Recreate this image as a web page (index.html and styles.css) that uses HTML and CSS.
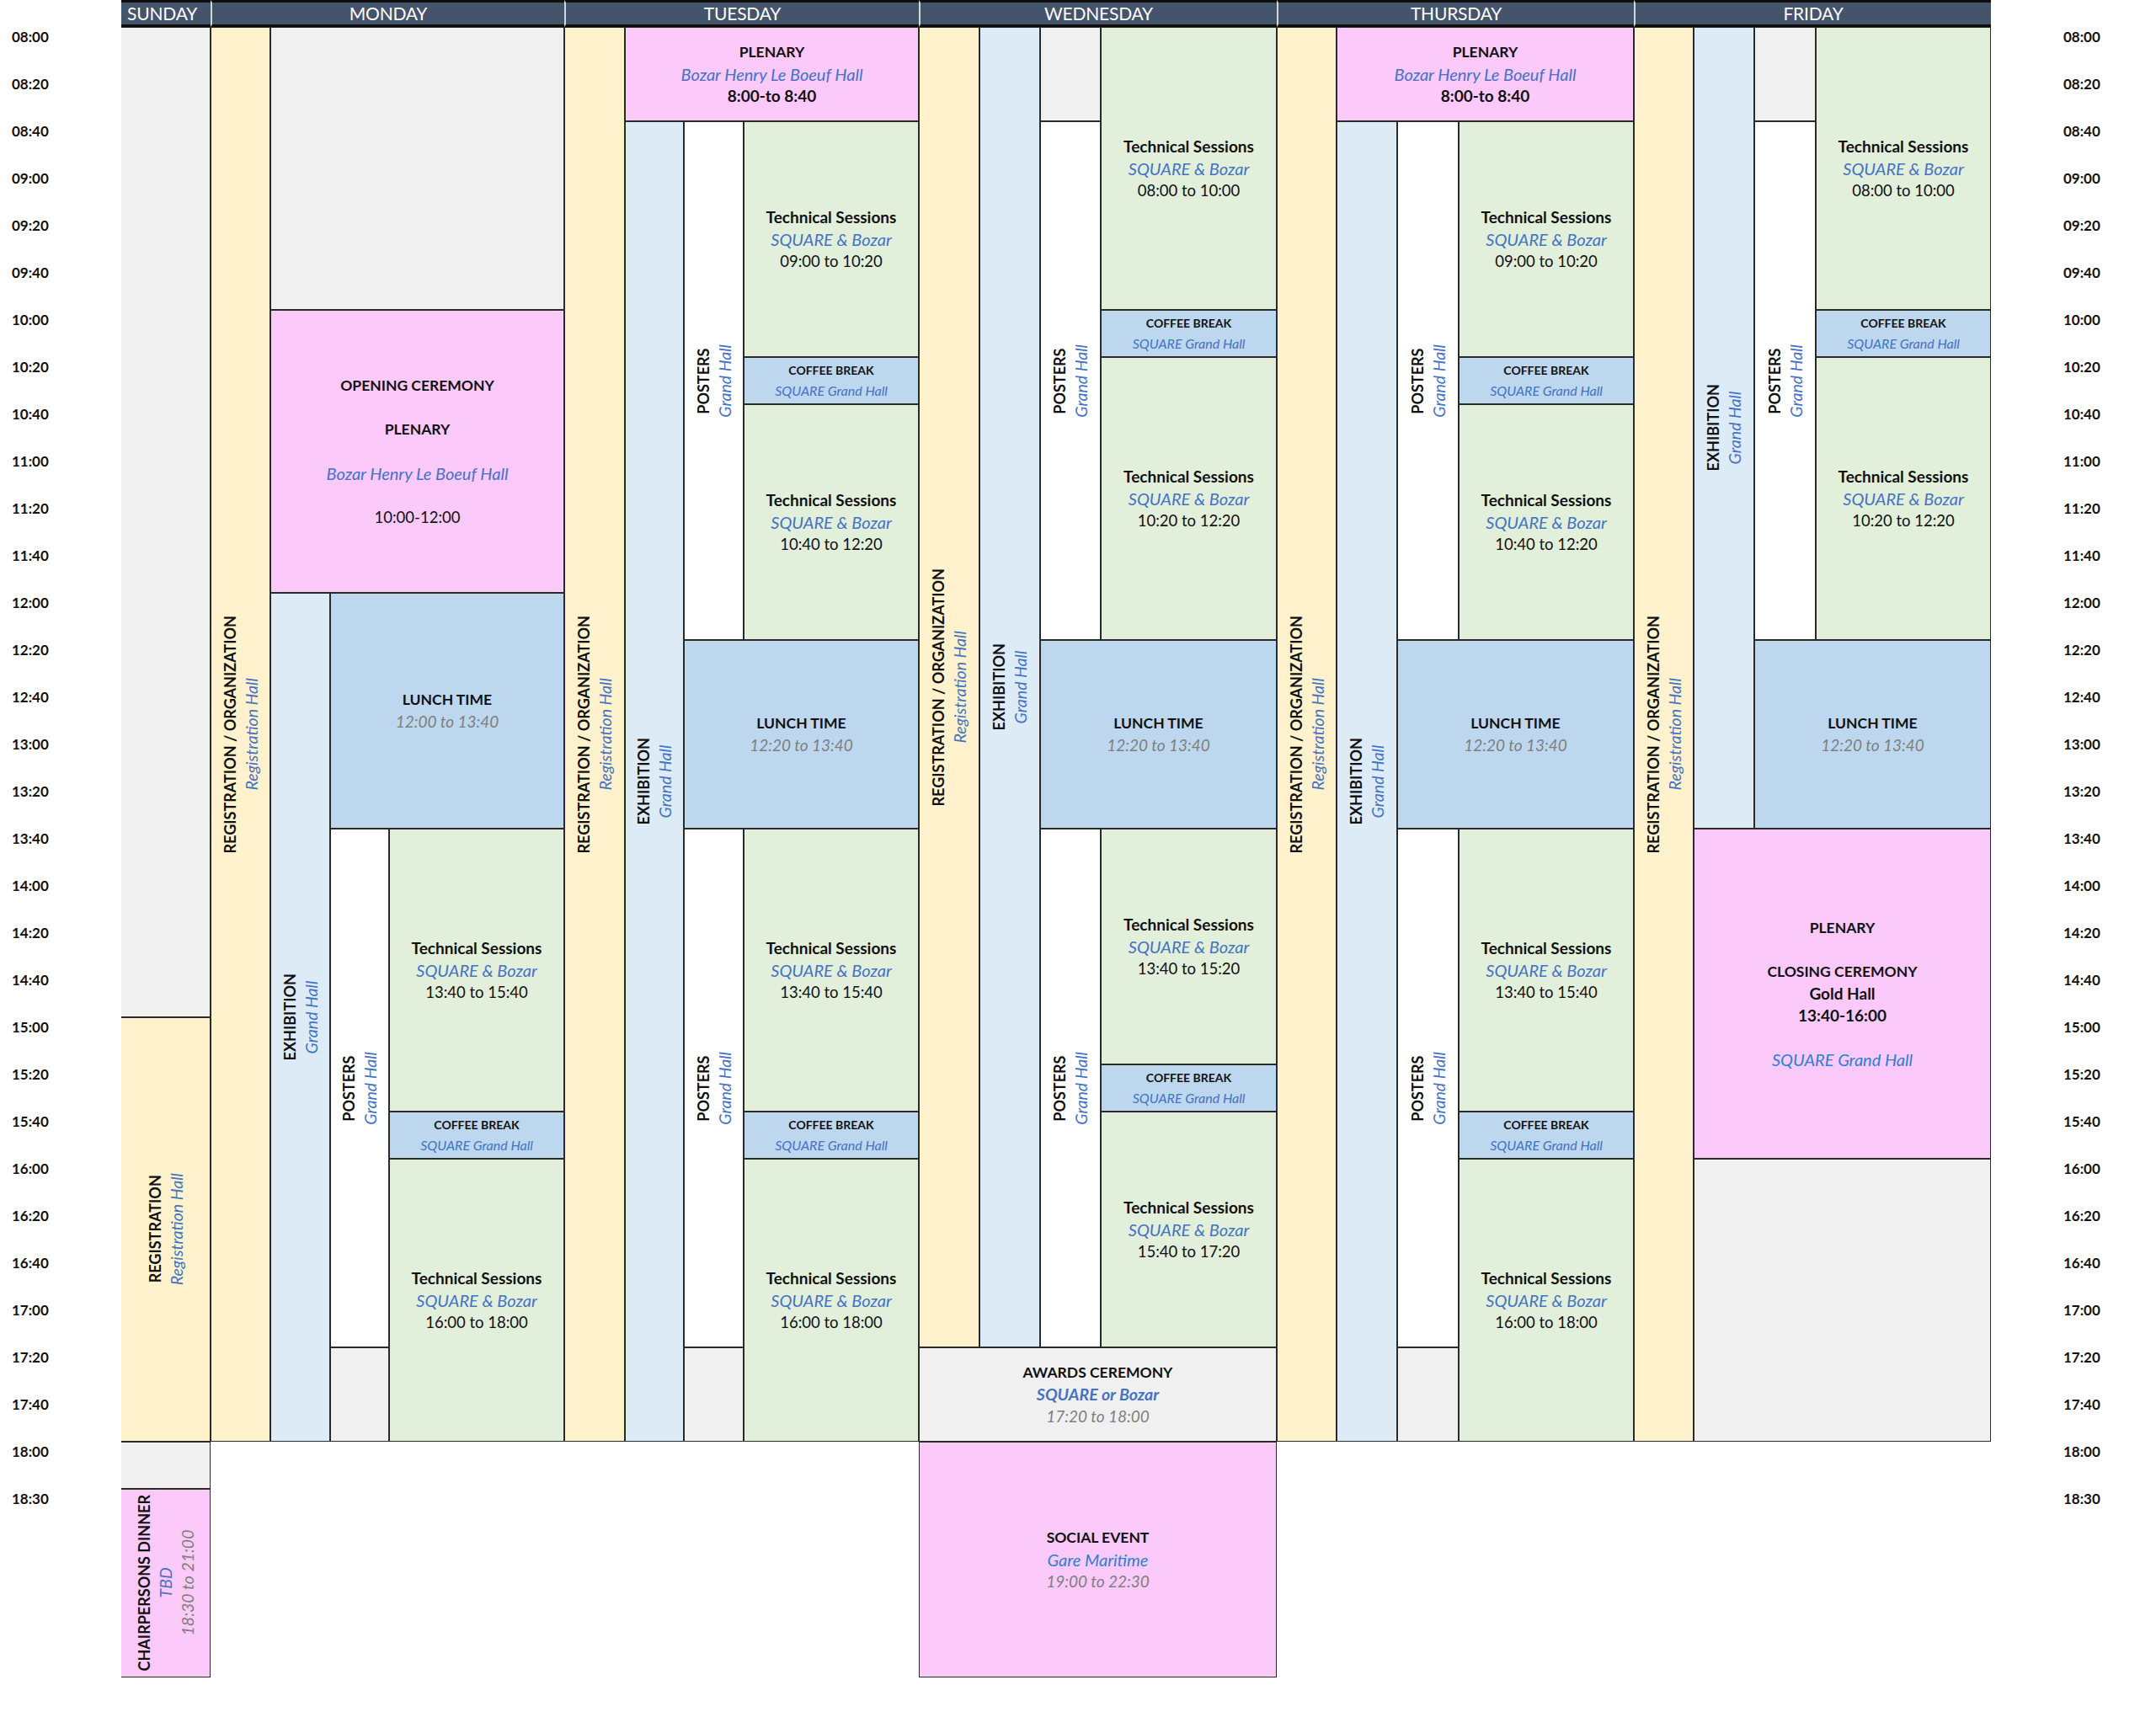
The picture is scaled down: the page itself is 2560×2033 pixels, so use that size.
FILE: index.html
```html
<!DOCTYPE html>
<html lang="en">
<head>
<meta charset="utf-8">
<title>Conference Week Schedule</title>
<link rel="stylesheet" href="styles.css">
</head>
<body>
<div class="sched">
  <!-- header -->
  <div class="hd hd-sun" style="grid-column:2/3">SUNDAY</div>
  <div class="hd" style="grid-column:3/7">MONDAY</div>
  <div class="hd" style="grid-column:7/11">TUESDAY</div>
  <div class="hd" style="grid-column:11/15">WEDNESDAY</div>
  <div class="hd" style="grid-column:15/19">THURSDAY</div>
  <div class="hd" style="grid-column:19/23">FRIDAY</div>

  <!-- time labels left -->
  <div class="tl" style="grid-row:2">08:00</div>
  <div class="tl" style="grid-row:3">08:20</div>
  <div class="tl" style="grid-row:4">08:40</div>
  <div class="tl" style="grid-row:5">09:00</div>
  <div class="tl" style="grid-row:6">09:20</div>
  <div class="tl" style="grid-row:7">09:40</div>
  <div class="tl" style="grid-row:8">10:00</div>
  <div class="tl" style="grid-row:9">10:20</div>
  <div class="tl" style="grid-row:10">10:40</div>
  <div class="tl" style="grid-row:11">11:00</div>
  <div class="tl" style="grid-row:12">11:20</div>
  <div class="tl" style="grid-row:13">11:40</div>
  <div class="tl" style="grid-row:14">12:00</div>
  <div class="tl" style="grid-row:15">12:20</div>
  <div class="tl" style="grid-row:16">12:40</div>
  <div class="tl" style="grid-row:17">13:00</div>
  <div class="tl" style="grid-row:18">13:20</div>
  <div class="tl" style="grid-row:19">13:40</div>
  <div class="tl" style="grid-row:20">14:00</div>
  <div class="tl" style="grid-row:21">14:20</div>
  <div class="tl" style="grid-row:22">14:40</div>
  <div class="tl" style="grid-row:23">15:00</div>
  <div class="tl" style="grid-row:24">15:20</div>
  <div class="tl" style="grid-row:25">15:40</div>
  <div class="tl" style="grid-row:26">16:00</div>
  <div class="tl" style="grid-row:27">16:20</div>
  <div class="tl" style="grid-row:28">16:40</div>
  <div class="tl" style="grid-row:29">17:00</div>
  <div class="tl" style="grid-row:30">17:20</div>
  <div class="tl" style="grid-row:31">17:40</div>
  <div class="tl" style="grid-row:32">18:00</div>
  <div class="tl" style="grid-row:33">18:30</div>

  <!-- time labels right -->
  <div class="tr" style="grid-row:2">08:00</div>
  <div class="tr" style="grid-row:3">08:20</div>
  <div class="tr" style="grid-row:4">08:40</div>
  <div class="tr" style="grid-row:5">09:00</div>
  <div class="tr" style="grid-row:6">09:20</div>
  <div class="tr" style="grid-row:7">09:40</div>
  <div class="tr" style="grid-row:8">10:00</div>
  <div class="tr" style="grid-row:9">10:20</div>
  <div class="tr" style="grid-row:10">10:40</div>
  <div class="tr" style="grid-row:11">11:00</div>
  <div class="tr" style="grid-row:12">11:20</div>
  <div class="tr" style="grid-row:13">11:40</div>
  <div class="tr" style="grid-row:14">12:00</div>
  <div class="tr" style="grid-row:15">12:20</div>
  <div class="tr" style="grid-row:16">12:40</div>
  <div class="tr" style="grid-row:17">13:00</div>
  <div class="tr" style="grid-row:18">13:20</div>
  <div class="tr" style="grid-row:19">13:40</div>
  <div class="tr" style="grid-row:20">14:00</div>
  <div class="tr" style="grid-row:21">14:20</div>
  <div class="tr" style="grid-row:22">14:40</div>
  <div class="tr" style="grid-row:23">15:00</div>
  <div class="tr" style="grid-row:24">15:20</div>
  <div class="tr" style="grid-row:25">15:40</div>
  <div class="tr" style="grid-row:26">16:00</div>
  <div class="tr" style="grid-row:27">16:20</div>
  <div class="tr" style="grid-row:28">16:40</div>
  <div class="tr" style="grid-row:29">17:00</div>
  <div class="tr" style="grid-row:30">17:20</div>
  <div class="tr" style="grid-row:31">17:40</div>
  <div class="tr" style="grid-row:32">18:00</div>
  <div class="tr" style="grid-row:33">18:30</div>

  <!-- SUNDAY -->
  <div class="cell sun grey" style="grid-column:2/3;grid-row:2/23"></div>
  <div class="cell sun reg" style="grid-column:2/3;grid-row:23/32">
    <div class="vt"><span class="t">REGISTRATION</span><span class="v">Registration Hall</span></div>
  </div>
  <div class="cell sun grey" style="grid-column:2/3;grid-row:32/33"></div>
  <div class="cell sun pink" style="grid-column:2/3;grid-row:33/37">
    <div class="vt"><span class="t">CHAIRPERSONS DINNER</span><span class="v">TBD</span><span class="g">18:30 to 21:00</span></div>
  </div>

  <!-- MONDAY -->
  <div class="cell reg" style="grid-column:3/4;grid-row:2/32">
    <div class="vt"><span class="t">REGISTRATION / ORGANIZATION</span><span class="v">Registration Hall</span></div>
  </div>
  <div class="cell grey" style="grid-column:4/7;grid-row:2/8"></div>
  <div class="cell pink" style="grid-column:4/7;grid-row:8/14">
    <span class="t">OPENING CEREMONY</span><span class="blank"></span>
    <span class="t">PLENARY</span><span class="blank"></span>
    <span class="v">Bozar Henry Le Boeuf Hall</span><span class="blank"></span>
    <span class="tm">10:00-12:00</span>
  </div>
  <div class="cell exh" style="grid-column:4/5;grid-row:14/32">
    <div class="vt"><span class="t">EXHIBITION</span><span class="v">Grand Hall</span></div>
  </div>
  <div class="cell lunch" style="grid-column:5/7;grid-row:14/19">
    <span class="t">LUNCH TIME</span><span class="g">12:00 to 13:40</span>
  </div>
  <div class="cell post" style="grid-column:5/6;grid-row:19/30">
    <div class="vt"><span class="t">POSTERS</span><span class="v">Grand Hall</span></div>
  </div>
  <div class="cell grey" style="grid-column:5/6;grid-row:30/32"></div>
  <div class="cell tech" style="grid-column:6/7;grid-row:19/25">
    <span class="tt">Technical Sessions</span><span class="v">SQUARE &amp; Bozar</span><span class="tm">13:40 to 15:40</span>
  </div>
  <div class="cell coffee" style="grid-column:6/7;grid-row:25/26">
    <span class="ct">COFFEE BREAK</span><span class="cv">SQUARE Grand Hall</span>
  </div>
  <div class="cell tech" style="grid-column:6/7;grid-row:26/32">
    <span class="tt">Technical Sessions</span><span class="v">SQUARE &amp; Bozar</span><span class="tm">16:00 to 18:00</span>
  </div>

  <!-- TUESDAY -->
  <div class="cell reg" style="grid-column:7/8;grid-row:2/32">
    <div class="vt"><span class="t">REGISTRATION / ORGANIZATION</span><span class="v">Registration Hall</span></div>
  </div>
  <div class="cell pink" style="grid-column:8/11;grid-row:2/4">
    <span class="t">PLENARY</span><span class="v">Bozar Henry Le Boeuf Hall</span><span class="tt">8:00-to 8:40</span>
  </div>
  <div class="cell exh" style="grid-column:8/9;grid-row:4/32">
    <div class="vt"><span class="t">EXHIBITION</span><span class="v">Grand Hall</span></div>
  </div>
  <div class="cell post" style="grid-column:9/10;grid-row:4/15">
    <div class="vt"><span class="t">POSTERS</span><span class="v">Grand Hall</span></div>
  </div>
  <div class="cell tech" style="grid-column:10/11;grid-row:4/9">
    <span class="tt">Technical Sessions</span><span class="v">SQUARE &amp; Bozar</span><span class="tm">09:00 to 10:20</span>
  </div>
  <div class="cell coffee" style="grid-column:10/11;grid-row:9/10">
    <span class="ct">COFFEE BREAK</span><span class="cv">SQUARE Grand Hall</span>
  </div>
  <div class="cell tech" style="grid-column:10/11;grid-row:10/15">
    <span class="tt">Technical Sessions</span><span class="v">SQUARE &amp; Bozar</span><span class="tm">10:40 to 12:20</span>
  </div>
  <div class="cell lunch" style="grid-column:9/11;grid-row:15/19">
    <span class="t">LUNCH TIME</span><span class="g">12:20 to 13:40</span>
  </div>
  <div class="cell post" style="grid-column:9/10;grid-row:19/30">
    <div class="vt"><span class="t">POSTERS</span><span class="v">Grand Hall</span></div>
  </div>
  <div class="cell grey" style="grid-column:9/10;grid-row:30/32"></div>
  <div class="cell tech" style="grid-column:10/11;grid-row:19/25">
    <span class="tt">Technical Sessions</span><span class="v">SQUARE &amp; Bozar</span><span class="tm">13:40 to 15:40</span>
  </div>
  <div class="cell coffee" style="grid-column:10/11;grid-row:25/26">
    <span class="ct">COFFEE BREAK</span><span class="cv">SQUARE Grand Hall</span>
  </div>
  <div class="cell tech" style="grid-column:10/11;grid-row:26/32">
    <span class="tt">Technical Sessions</span><span class="v">SQUARE &amp; Bozar</span><span class="tm">16:00 to 18:00</span>
  </div>

  <!-- WEDNESDAY -->
  <div class="cell reg" style="grid-column:11/12;grid-row:2/30">
    <div class="vt"><span class="t">REGISTRATION / ORGANIZATION</span><span class="v">Registration Hall</span></div>
  </div>
  <div class="cell exh" style="grid-column:12/13;grid-row:2/30">
    <div class="vt"><span class="t">EXHIBITION</span><span class="v">Grand Hall</span></div>
  </div>
  <div class="cell grey" style="grid-column:13/14;grid-row:2/4"></div>
  <div class="cell post" style="grid-column:13/14;grid-row:4/15">
    <div class="vt"><span class="t">POSTERS</span><span class="v">Grand Hall</span></div>
  </div>
  <div class="cell tech" style="grid-column:14/15;grid-row:2/8">
    <span class="tt">Technical Sessions</span><span class="v">SQUARE &amp; Bozar</span><span class="tm">08:00 to 10:00</span>
  </div>
  <div class="cell coffee" style="grid-column:14/15;grid-row:8/9">
    <span class="ct">COFFEE BREAK</span><span class="cv">SQUARE Grand Hall</span>
  </div>
  <div class="cell tech" style="grid-column:14/15;grid-row:9/15">
    <span class="tt">Technical Sessions</span><span class="v">SQUARE &amp; Bozar</span><span class="tm">10:20 to 12:20</span>
  </div>
  <div class="cell lunch" style="grid-column:13/15;grid-row:15/19">
    <span class="t">LUNCH TIME</span><span class="g">12:20 to 13:40</span>
  </div>
  <div class="cell post" style="grid-column:13/14;grid-row:19/30">
    <div class="vt"><span class="t">POSTERS</span><span class="v">Grand Hall</span></div>
  </div>
  <div class="cell tech" style="grid-column:14/15;grid-row:19/24">
    <span class="tt">Technical Sessions</span><span class="v">SQUARE &amp; Bozar</span><span class="tm">13:40 to 15:20</span>
  </div>
  <div class="cell coffee" style="grid-column:14/15;grid-row:24/25">
    <span class="ct">COFFEE BREAK</span><span class="cv">SQUARE Grand Hall</span>
  </div>
  <div class="cell tech" style="grid-column:14/15;grid-row:25/30">
    <span class="tt">Technical Sessions</span><span class="v">SQUARE &amp; Bozar</span><span class="tm">15:40 to 17:20</span>
  </div>
  <div class="cell grey" style="grid-column:11/15;grid-row:30/32">
    <span class="t">AWARDS CEREMONY</span><span class="vb">SQUARE or Bozar</span><span class="g">17:20 to 18:00</span>
  </div>
  <div class="cell pink" style="grid-column:11/15;grid-row:32/37">
    <span class="t">SOCIAL EVENT</span><span class="v2">Gare Maritime</span><span class="g">19:00 to 22:30</span>
  </div>

  <!-- THURSDAY -->
  <div class="cell reg" style="grid-column:15/16;grid-row:2/32">
    <div class="vt"><span class="t">REGISTRATION / ORGANIZATION</span><span class="v">Registration Hall</span></div>
  </div>
  <div class="cell pink" style="grid-column:16/19;grid-row:2/4">
    <span class="t">PLENARY</span><span class="v">Bozar Henry Le Boeuf Hall</span><span class="tt">8:00-to 8:40</span>
  </div>
  <div class="cell exh" style="grid-column:16/17;grid-row:4/32">
    <div class="vt"><span class="t">EXHIBITION</span><span class="v">Grand Hall</span></div>
  </div>
  <div class="cell post" style="grid-column:17/18;grid-row:4/15">
    <div class="vt"><span class="t">POSTERS</span><span class="v">Grand Hall</span></div>
  </div>
  <div class="cell tech" style="grid-column:18/19;grid-row:4/9">
    <span class="tt">Technical Sessions</span><span class="v">SQUARE &amp; Bozar</span><span class="tm">09:00 to 10:20</span>
  </div>
  <div class="cell coffee" style="grid-column:18/19;grid-row:9/10">
    <span class="ct">COFFEE BREAK</span><span class="cv">SQUARE Grand Hall</span>
  </div>
  <div class="cell tech" style="grid-column:18/19;grid-row:10/15">
    <span class="tt">Technical Sessions</span><span class="v">SQUARE &amp; Bozar</span><span class="tm">10:40 to 12:20</span>
  </div>
  <div class="cell lunch" style="grid-column:17/19;grid-row:15/19">
    <span class="t">LUNCH TIME</span><span class="g">12:20 to 13:40</span>
  </div>
  <div class="cell post" style="grid-column:17/18;grid-row:19/30">
    <div class="vt"><span class="t">POSTERS</span><span class="v">Grand Hall</span></div>
  </div>
  <div class="cell grey" style="grid-column:17/18;grid-row:30/32"></div>
  <div class="cell tech" style="grid-column:18/19;grid-row:19/25">
    <span class="tt">Technical Sessions</span><span class="v">SQUARE &amp; Bozar</span><span class="tm">13:40 to 15:40</span>
  </div>
  <div class="cell coffee" style="grid-column:18/19;grid-row:25/26">
    <span class="ct">COFFEE BREAK</span><span class="cv">SQUARE Grand Hall</span>
  </div>
  <div class="cell tech" style="grid-column:18/19;grid-row:26/32">
    <span class="tt">Technical Sessions</span><span class="v">SQUARE &amp; Bozar</span><span class="tm">16:00 to 18:00</span>
  </div>

  <!-- FRIDAY -->
  <div class="cell reg" style="grid-column:19/20;grid-row:2/32">
    <div class="vt"><span class="t">REGISTRATION / ORGANIZATION</span><span class="v">Registration Hall</span></div>
  </div>
  <div class="cell exh" style="grid-column:20/21;grid-row:2/19">
    <div class="vt"><span class="t">EXHIBITION</span><span class="v">Grand Hall</span></div>
  </div>
  <div class="cell grey" style="grid-column:21/22;grid-row:2/4"></div>
  <div class="cell post" style="grid-column:21/22;grid-row:4/15">
    <div class="vt"><span class="t">POSTERS</span><span class="v">Grand Hall</span></div>
  </div>
  <div class="cell tech" style="grid-column:22/23;grid-row:2/8">
    <span class="tt">Technical Sessions</span><span class="v">SQUARE &amp; Bozar</span><span class="tm">08:00 to 10:00</span>
  </div>
  <div class="cell coffee" style="grid-column:22/23;grid-row:8/9">
    <span class="ct">COFFEE BREAK</span><span class="cv">SQUARE Grand Hall</span>
  </div>
  <div class="cell tech" style="grid-column:22/23;grid-row:9/15">
    <span class="tt">Technical Sessions</span><span class="v">SQUARE &amp; Bozar</span><span class="tm">10:20 to 12:20</span>
  </div>
  <div class="cell lunch" style="grid-column:21/23;grid-row:15/19">
    <span class="t">LUNCH TIME</span><span class="g">12:20 to 13:40</span>
  </div>
  <div class="cell pink" style="grid-column:20/23;grid-row:19/26">
    <span class="t">PLENARY</span><span class="blank"></span>
    <span class="t">CLOSING CEREMONY</span>
    <span class="tt">Gold Hall</span>
    <span class="tt">13:40-16:00</span><span class="blank"></span>
    <span class="v2">SQUARE Grand Hall</span>
  </div>
  <div class="cell grey" style="grid-column:20/23;grid-row:26/32"></div>
</div>
</body>
</html>
```

FILE: styles.css
```css
* { box-sizing: border-box; }

html, body {
  margin: 0;
  padding: 0;
  background: #ffffff;
}

body {
  font-family: "Lato", "Liberation Sans", sans-serif;
  color: #111111;
}

.sched {
  display: grid;
  grid-template-columns:
    144px 106px
    71px 71px 70px 208px
    72px 70px 71px 208px
    72px 72px 72px 209px
    71px 72px 73px 208px
    71px 72px 73px 208px
    196px;
  grid-template-rows: 32px repeat(35, 56px);
  width: 2560px;
}

/* header */
.hd {
  grid-row: 1 / 2;
  background: #44546a;
  border-top: 3px solid #0d0d0d;
  border-bottom: 3px solid #0d0d0d;
  border-left: 2px solid #d4d7dc;
  color: #ffffff;
  font-size: 21px;
  line-height: 26px;
  text-align: center;
  letter-spacing: -0.2px;
}
.hd-sun {
  border-left: 0;
  text-align: left;
  padding-left: 7px;
}

/* time labels */
.tl, .tr {
  font-size: 17px;
  font-weight: 700;
  line-height: 22px;
  padding-top: 1px;
  color: #111111;
}
.tl { grid-column: 1 / 2; padding-left: 14px; }
.tr { grid-column: 23 / 24; padding-left: 86px; }

/* cells */
.cell {
  border: 1px solid #2a2a2a;
  display: flex;
  flex-direction: column;
  align-items: center;
  justify-content: center;
  text-align: center;
  line-height: 26px;
  font-size: 18px;
  overflow: hidden;
}
.sun { border-left: 0; }

.grey   { background: #f0f0f0; }
.reg    { background: #fff2cc; }
.exh    { background: #ddebf7; }
.post   { background: #ffffff; }
.tech   { background: #e2efda; }
.coffee { background: #bdd7ee; line-height: 24px; }
.lunch  { background: #bdd7ee; }
.pink   { background: #fcc9fb; }

.t  { font-weight: 700; font-size: 17.5px; color: #111111; white-space: nowrap; }
.tt { font-weight: 700; font-size: 19px; color: #111111; white-space: nowrap; }
.v  { font-style: italic; font-size: 20px; color: #4472c4; white-space: nowrap; }
.vb { font-style: italic; font-weight: 700; font-size: 19.5px; color: #4472c4; white-space: nowrap; }
.v2 { font-style: italic; font-size: 20px; color: #2e7fcf; white-space: nowrap; }
.tm { font-size: 18.5px; color: #111111; white-space: nowrap; }
.g  { font-style: italic; font-size: 19px; color: #7f7f7f; white-space: nowrap; }

.ct { font-weight: 700; font-size: 14px; color: #111111; white-space: nowrap; }
.cv { font-style: italic; font-size: 16px; color: #4472c4; white-space: nowrap; }

.blank { display: block; height: 26px; }

/* vertical (bottom-to-top) text */
.vt {
  writing-mode: vertical-rl;
  transform: rotate(180deg);
  display: flex;
  flex-direction: column;
  align-items: center;
  line-height: 26px;
}
.vt .t { font-size: 18px; }
.vt .v { font-size: 19.5px; }
.vt .g { font-size: 19.5px; }
```
